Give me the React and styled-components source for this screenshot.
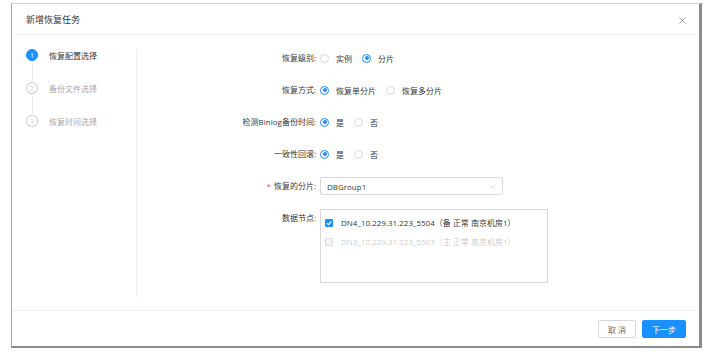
import styled, { createGlobalStyle } from "styled-components";

const GlobalStyle = createGlobalStyle`
  html, body {
    margin: 0;
    padding: 0;
    background: #fff;
  }
  body {
    font-family: "Open Sans", "Noto Sans CJK SC", sans-serif;
    font-size: 8px;
    color: rgba(0, 0, 0, 0.85);
  }
`;

const steps = [
  { n: 1, title: "恢复配置选择", active: true },
  { n: 2, title: "备份文件选择" },
  { n: 3, title: "恢复时间选择" },
];

const nodes = [
  { name: "DN4_10.229.31.223_5504（备 正常 南京机房1）", checked: true },
  { name: "DN3_10.229.31.223_5503（主 正常 南京机房1）", disabled: true },
];

function Radio({ checked, children }) {
  return (
    <RadioLabel>
      <RadioDot $checked={checked} />
      <RadioText>{children}</RadioText>
    </RadioLabel>
  );
}

function RadioRow({ label, options, value }) {
  return (
    <>
      <Label>{label}:</Label>
      <Control>
        {options.map((o) => (
          <Radio key={o} checked={o === value}>
            {o}
          </Radio>
        ))}
      </Control>
    </>
  );
}

export default function App() {
  return (
    <>
      <GlobalStyle />
      <Modal>
        <Header>
          <Title>新增恢复任务</Title>
          <Close viewBox="0 0 8 8">
            <path d="M0.5 0.5 L7.5 7.5 M7.5 0.5 L0.5 7.5" />
          </Close>
        </Header>
        <Body>
          <Steps>
            {steps.map((s, i) => (
              <div key={s.n}>
                <Step>
                  <StepIcon $active={s.active}>{s.n}</StepIcon>
                  <StepTitle $active={s.active}>{s.title}</StepTitle>
                </Step>
                {i < steps.length - 1 && <Connector />}
              </div>
            ))}
          </Steps>
          <Form>
            <RadioRow label="恢复级别" options={["实例", "分片"]} value="分片" />
            <RadioRow
              label="恢复方式"
              options={["恢复单分片", "恢复多分片"]}
              value="恢复单分片"
            />
            <RadioRow label="检测Binlog备份时间" options={["是", "否"]} value="是" />
            <RadioRow label="一致性回滚" options={["是", "否"]} value="是" />
            <Label>
              <Required>*</Required>恢复的分片:
            </Label>
            <Control>
              <Select>
                <span>DBGroup1</span>
                <Chevron viewBox="0 0 8 5">
                  <path d="M0.5 0.5 L4 4 L7.5 0.5" />
                </Chevron>
              </Select>
            </Control>
            <Label>数据节点:</Label>
            <Control>
              <NodeBox>
                {nodes.map((n) => (
                  <NodeItem key={n.name} $disabled={n.disabled}>
                    <CheckBox $checked={n.checked} $disabled={n.disabled}>
                      {n.checked && (
                        <svg viewBox="0 0 8 8" width="8" height="8">
                          <path
                            d="M1.8 4.1 L3.4 5.6 L6.3 2.6"
                            fill="none"
                            stroke="#fff"
                            strokeWidth="1.2"
                          />
                        </svg>
                      )}
                    </CheckBox>
                    {n.name}
                  </NodeItem>
                ))}
              </NodeBox>
            </Control>
          </Form>
        </Body>
        <Footer>
          <Button>取 消</Button>
          <Button $primary>下一步</Button>
        </Footer>
      </Modal>
    </>
  );
}

const Modal = styled.div`
  margin: 3px 0 0 11px;
  width: 687px;
  background: #fff;
  border-top: 1px solid #d4d4d4;
  border-left: 1px solid #a6a6a6;
  border-right: 3px solid #8c8c8c;
  border-bottom: 2px solid #8c8c8c;
`;

const Header = styled.div`
  display: flex;
  align-items: center;
  justify-content: space-between;
  height: 30px;
  padding: 0 13px 0 14px;
  border-bottom: 1px solid #f0f0f0;
`;

const Title = styled.div`
  font-size: 9px;
  color: rgba(0, 0, 0, 0.85);
`;

const Close = styled.svg`
  width: 7px;
  height: 7px;
  margin-top: 3px;
  fill: none;
  stroke: rgba(0, 0, 0, 0.45);
  stroke-width: 0.9;
`;

const Body = styled.div`
  display: flex;
  height: 275px;
  padding: 14px 0 13px;
  box-sizing: border-box;
`;

const Steps = styled.div`
  width: 110px;
  padding-left: 14px;
  border-right: 1px solid #f0f0f0;
`;

const Step = styled.div`
  display: flex;
  align-items: center;
  height: 12px;
`;

const StepIcon = styled.div`
  width: 12px;
  height: 12px;
  box-sizing: border-box;
  border-radius: 50%;
  display: flex;
  align-items: center;
  justify-content: center;
  font-size: 7px;
  background: ${(p) => (p.$active ? "#1890ff" : "#fff")};
  color: ${(p) => (p.$active ? "#fff" : "rgba(0, 0, 0, 0.25)")};
  border: 1px solid ${(p) => (p.$active ? "#1890ff" : "rgba(0, 0, 0, 0.2)")};
`;

const StepTitle = styled.div`
  margin-left: 11px;
  color: ${(p) => (p.$active ? "rgba(0, 0, 0, 0.85)" : "rgba(0, 0, 0, 0.4)")};
`;

const Connector = styled.div`
  width: 1px;
  height: 18px;
  margin: 2px 0 1px 5.5px;
  background: #e8e8e8;
`;

const Form = styled.div`
  flex: 1;
  display: grid;
  grid-template-columns: 183px 1fr;
  grid-auto-rows: min-content;
  row-gap: 14px;
  align-content: start;
`;

const Label = styled.div`
  height: 18px;
  line-height: 18px;
  text-align: right;
  padding-right: 4px;
  color: rgba(0, 0, 0, 0.85);
`;

const Required = styled.span`
  color: #ff4d4f;
  margin-right: 3px;
`;

const Control = styled.div`
  display: flex;
  align-items: center;
  min-height: 18px;
  align-self: start;
`;

const RadioLabel = styled.label`
  display: inline-flex;
  align-items: center;
  margin-right: 3px;
`;

const RadioDot = styled.span`
  width: 9px;
  height: 9px;
  box-sizing: border-box;
  border-radius: 50%;
  border: 1px solid ${(p) => (p.$checked ? "#1890ff" : "#d9d9d9")};
  position: relative;
  &::after {
    content: "";
    display: ${(p) => (p.$checked ? "block" : "none")};
    position: absolute;
    left: 1.5px;
    top: 1.5px;
    width: 4px;
    height: 4px;
    border-radius: 50%;
    background: #1890ff;
  }
`;

const RadioText = styled.span`
  padding: 0 7px;
`;

const Select = styled.div`
  width: 183px;
  height: 18px;
  box-sizing: border-box;
  border: 1px solid #d9d9d9;
  border-radius: 2px;
  display: flex;
  align-items: center;
  justify-content: space-between;
  padding: 0 6px 0 6px;
`;

const Chevron = styled.svg`
  width: 7px;
  height: 5px;
  fill: none;
  stroke: rgba(0, 0, 0, 0.25);
  stroke-width: 0.8;
`;

const NodeBox = styled.div`
  width: 228px;
  height: 74px;
  box-sizing: border-box;
  border: 1px solid #d9d9d9;
  padding: 3px 0 0 4px;
`;

const NodeItem = styled.div`
  display: flex;
  align-items: center;
  height: 19px;
  color: ${(p) => (p.$disabled ? "rgba(0, 0, 0, 0.25)" : "rgba(0, 0, 0, 0.85)")};
`;

const CheckBox = styled.span`
  width: 8px;
  height: 8px;
  box-sizing: border-box;
  border-radius: 1px;
  margin-right: 8px;
  display: flex;
  border: 1px solid
    ${(p) => (p.$checked ? "#1890ff" : "#d9d9d9")};
  background: ${(p) =>
    p.$checked ? "#1890ff" : p.$disabled ? "#f5f5f5" : "#fff"};
  svg {
    margin: -1px;
  }
`;

const Footer = styled.div`
  display: flex;
  justify-content: flex-end;
  gap: 6px;
  padding: 9px 13px 8px;
  border-top: 1px solid #f0f0f0;
`;

const Button = styled.button`
  height: 18px;
  padding: 0 9px;
  min-width: ${(p) => (p.$primary ? "43px" : "37px")};
  font-family: inherit;
  font-size: 8px;
  border-radius: 2px;
  cursor: pointer;
  border: 1px solid ${(p) => (p.$primary ? "#1890ff" : "#d9d9d9")};
  background: ${(p) => (p.$primary ? "#1890ff" : "#fff")};
  color: ${(p) => (p.$primary ? "#fff" : "rgba(0, 0, 0, 0.65)")};
`;
